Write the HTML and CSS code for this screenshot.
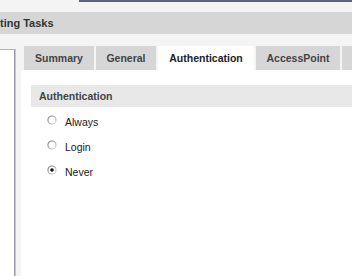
FILE: index.html
```html
<!DOCTYPE html>
<html lang="en">
<head>
    <meta charset="UTF-8">
    <title>Testing Tasks</title>
    <link rel="stylesheet" href="styles.css">
</head>
<body>
    <div class="top-strip"><div class="top-line"></div></div>
    <div class="title-bar">ting Tasks</div>
    <div class="main">
        <div class="sidebar"></div>
        <div class="workspace">
            <div class="tabs">
                <div class="tab tab-summary">Summary</div>
                <div class="tab tab-general">General</div>
                <div class="tab tab-auth active">Authentication</div>
                <div class="tab tab-ap">AccessPoint</div>
                <div class="tab tab-more"></div>
            </div>
            <div class="panel">
                <div class="section-header">Authentication</div>
                <div class="radio-list">
                    <label class="radio-row">
                        <svg class="radio" width="10" height="10" viewBox="0 0 10 10"><defs><linearGradient id="rg1" x1="0" y1="0" x2="1" y2="1"><stop offset="0" stop-color="#6a6a6a"/><stop offset="1" stop-color="#e4e4e4"/></linearGradient></defs><circle cx="5" cy="5" r="4.6" fill="url(#rg1)"/><circle cx="5" cy="5" r="3.5" fill="#fff"/></svg>
                        <span>Always</span>
                    </label>
                    <label class="radio-row">
                        <svg class="radio" width="10" height="10" viewBox="0 0 10 10"><defs><linearGradient id="rg2" x1="0" y1="0" x2="1" y2="1"><stop offset="0" stop-color="#6a6a6a"/><stop offset="1" stop-color="#e4e4e4"/></linearGradient></defs><circle cx="5" cy="5" r="4.6" fill="url(#rg2)"/><circle cx="5" cy="5" r="3.5" fill="#fff"/></svg>
                        <span>Login</span>
                    </label>
                    <label class="radio-row">
                        <svg class="radio" width="10" height="10" viewBox="0 0 10 10"><defs><linearGradient id="rg3" x1="0" y1="0" x2="1" y2="1"><stop offset="0" stop-color="#6a6a6a"/><stop offset="1" stop-color="#e4e4e4"/></linearGradient></defs><circle cx="5" cy="5" r="4.6" fill="url(#rg3)"/><circle cx="5" cy="5" r="3.5" fill="#fff"/><circle cx="5" cy="5" r="1.8" fill="#111"/></svg>
                        <span>Never</span>
                    </label>
                </div>
            </div>
        </div>
    </div>
</body>
</html>
```

FILE: styles.css
```css
body {
    margin: 0;
    padding: 0;
    height: 276px;
    overflow: hidden;
    background-color: #f4f4f4;
    font-family: "Liberation Sans", Arial, sans-serif;
    display: flex;
    flex-direction: column;
}
.top-strip {
    height: 12px;
}
.top-line {
    margin-left: 79px;
    height: 2px;
    background-color: #5b6678;
}
.title-bar {
    height: 22px;
    line-height: 22px;
    background-color: #d6d6d6;
    font-size: 11px;
    font-weight: bold;
    color: #333;
}
.main {
    flex: 1;
    display: flex;
    margin-top: 12px;
}
.sidebar {
    width: 14px;
    margin-top: 3px;
    background-color: #fff;
    border-top: 1px solid #b4b4b4;
    border-right: 1px solid #9a9ab2;
    box-shadow: 1px 0 0 #c4c4d4;
}
.workspace {
    flex: 1;
    display: flex;
    flex-direction: column;
    margin-left: 6px;
}
.tabs {
    display: flex;
    gap: 2px;
    margin-left: 3px;
}
.tab {
    height: 24px;
    line-height: 24px;
    text-align: center;
    background-color: #d6d6d6;
    font-size: 10.5px;
    font-weight: bold;
    color: #444;
}
.tab.active {
    background-color: #fff;
    color: #222;
}
.tab-summary { width: 70px; }
.tab-general { width: 60px; }
.tab-auth { width: 96px; }
.tab-ap { width: 84px; }
.tab-more { flex: 1; }
.panel {
    flex: 1;
    background-color: #fff;
    padding: 15px 0 0 10px;
}
.section-header {
    height: 22px;
    line-height: 22px;
    padding-left: 8px;
    background-color: #e8e8e8;
    font-size: 10.5px;
    font-weight: bold;
    color: #444;
}
.radio-list {
    margin-top: 2px;
    padding-left: 16px;
}
.radio-row {
    display: flex;
    align-items: center;
    gap: 8px;
    height: 25px;
    font-size: 10.5px;
    color: #1a1a1a;
}
.radio {
    margin-top: -4px;
}
```
